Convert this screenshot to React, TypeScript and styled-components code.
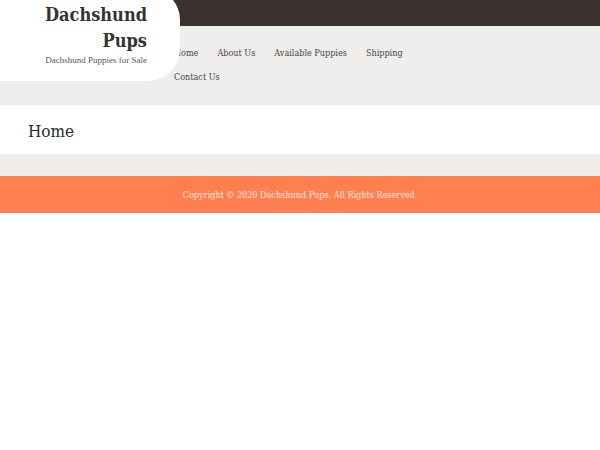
import React, { FunctionComponent, ReactNode } from 'react'
import styled, { createGlobalStyle } from 'styled-components'

const GlobalStyles = createGlobalStyle`
  *, *::before, *::after {
    box-sizing: border-box;
  }

  body {
    margin: 0;
    background: #fff;
    color: #3a3a3a;
    font-family: 'DejaVu Serif Condensed', 'DejaVu Serif', serif;
  }

  a {
    color: inherit;
    text-decoration: none;
  }
`

const HeaderStyled = styled.header`
  display: grid;
  grid-template-columns: 29% 45% 1fr;
  align-items: start;
  padding-bottom: 16px;
  overflow: hidden;
  background: linear-gradient(#3b322f 26px, #f0eeed 26px);
`

const Brand = styled.div`
  z-index: 1;
  margin: -12px -6px 0 0;
  padding: 14px 33px 14px 28px;
  border-radius: 0 32px 32px 0;
  background: #fff;
  text-align: right;
`

const SiteTitle = styled.p`
  margin: 0;
  font-size: 18px;
  font-weight: 700;
  line-height: 26px;
  color: #333;
`

const Tagline = styled.p`
  margin: 0;
  font-family: 'Liberation Serif', serif;
  font-size: 9px;
  line-height: 13px;
  color: #555;
  white-space: nowrap;
`

const Nav = styled.nav`
  padding-top: 41px;
`

const NavList = styled.ul`
  display: flex;
  flex-wrap: wrap;
  column-gap: 19px;
  margin: 0;
  padding: 0;
  list-style: none;
`

const NavLink = styled.a`
  display: block;
  font-size: 9px;
  line-height: 24px;
  color: #444;
`

const TitleBand = styled.section`
  padding: 14px 28px 10px;
`

const PageTitle = styled.h1`
  margin: 0;
  font-size: 17px;
  font-weight: 400;
  line-height: 25px;
  color: #222b2b;
`

const Content = styled.main`
  height: 22px;
  background: #f0eeed;
`

const FooterStyled = styled.footer`
  padding: 7px 28px 5px;
  background: #ff7f50;
  color: #ffe9df;
  font-size: 9px;
  line-height: 25px;
  text-align: center;
`

const navItems = ['Home', 'About Us', 'Available Puppies', 'Shipping', 'Contact Us']

const Header: FunctionComponent = () => {
  const renderNavItem = (label: string): ReactNode =>
    <li key={label}>
      <NavLink href='#'>{ label }</NavLink>
    </li>

  return (
    <HeaderStyled>
      <Brand>
        <SiteTitle>
          <a href='#'>Dachshund Pups</a>
        </SiteTitle>
        <Tagline>Dachshund Puppies for Sale</Tagline>
      </Brand>
      <Nav>
        <NavList>
          { navItems.map(renderNavItem) }
        </NavList>
      </Nav>
    </HeaderStyled>
  )
}

const App: FunctionComponent = () =>
  <>
    <GlobalStyles />
    <Header />
    <TitleBand>
      <PageTitle>Home</PageTitle>
    </TitleBand>
    <Content />
    <FooterStyled>Copyright © 2020 Dachshund Pups. All Rights Reserved.</FooterStyled>
  </>

export default App
